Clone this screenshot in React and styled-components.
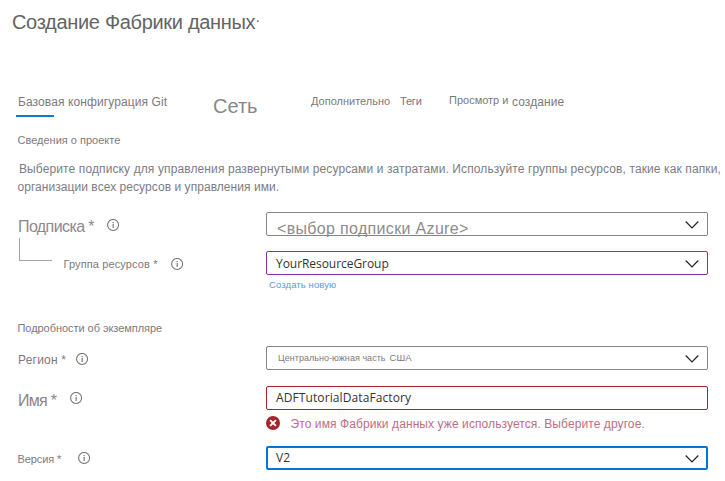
import React from 'react';
import styled, { createGlobalStyle } from 'styled-components';

const GlobalStyle = createGlobalStyle`
  * { box-sizing: border-box; }
  body { margin: 0; background: #fff; overflow: hidden; }
`;

const Page = styled.main`
  display: flex;
  flex-direction: column;
  width: 725px;
  height: 481px;
  overflow: hidden;
  background: #fff;
  font-family: 'Liberation Sans', Arial, sans-serif;
`;

const Text = styled.span`
  display: block;
  flex: none;
  font-size: ${p => p.$size || 11}px;
  line-height: 20px;
  letter-spacing: ${p => p.$spacing || 0}px;
  color: ${p => p.$color || '#7c7a80'};
  white-space: pre;
  margin: ${p => p.$top || 0}px 0 0 ${p => p.$left || 0}px;
`;

const Header = styled.header`
  display: flex;
  height: 90px;
  padding: 12px 0 0 12px;
`;

const Title = styled.h1`
  margin: 0;
  font-size: 20px;
  font-weight: 400;
  line-height: 20px;
  letter-spacing: -0.32px;
  color: #646464;
  white-space: nowrap;
`;

const Tabs = styled.nav`
  display: flex;
  align-items: flex-start;
  height: 40px;
  padding-left: 16px;
`;

const Tab = styled.div`
  flex: none;
  width: ${p => p.$width}px;
`;

const ActiveLine = styled.div`
  width: 38px;
  height: 2px;
  margin-top: 3px;
  background: #0f78d4;
`;

const Section = styled.section`
  height: ${p => p.$height}px;
  padding-left: 17px;
`;

const Description = styled.p`
  margin: 9px 0 0;
  display: flex;
  flex-direction: column;
`;

const FieldRow = styled.div`
  display: flex;
  align-items: flex-start;
  flex: none;
  height: ${p => p.$height}px;
`;

const LabelCell = styled.div`
  display: flex;
  align-items: flex-start;
  flex: none;
  width: 266px;
  height: 24px;
`;

const Branch = styled.div`
  flex: none;
  width: 33px;
  height: 23px;
  margin: -13px 11px 0 19px;
  border-left: 1px solid #a3a3a3;
  border-bottom: 1px solid #a3a3a3;
`;

const LabelText = styled.div`
  flex: none;
  width: ${p => p.$width}px;
`;

const InfoSlot = styled.div`
  flex: none;
  height: 13px;
  margin-top: ${p => p.$top}px;
`;

const Control = styled.div`
  display: flex;
  align-items: flex-start;
  justify-content: space-between;
  width: 442px;
  height: 24px;
  padding-right: ${p => (p.$thick ? 7 : 8)}px;
  border: ${p => (p.$thick ? 2 : 1)}px solid ${p => p.$border || '#868686'};
  border-radius: 2px;
`;

const Value = styled.span`
  font-family: 'Open Sans', 'Noto Sans', sans-serif;
  font-size: 12px;
  line-height: 20px;
  letter-spacing: ${p => p.$spacing || 0}px;
  color: #333;
  margin: ${p => p.$top ?? 1}px 0 0 ${p => p.$left ?? 9}px;
`;

const RegionValue = styled.div`
  display: flex;
  gap: 4px;
  padding: 1px 0 0 11px;
`;

const ChevronSlot = styled.div`
  height: 8px;
  margin-top: ${p => p.$top ?? 8}px;
`;

const Svg = styled.svg`
  display: block;
`;

const MessageRow = styled.div`
  display: flex;
  align-items: flex-start;
  flex: none;
  height: ${p => p.$height}px;
  padding-left: 266px;
`;

const ErrorSlot = styled.div`
  width: 14px;
  margin-top: 6px;
`;

function Info({ top }) {
  return (
    <InfoSlot $top={top}>
      <Svg width="13" height="13" viewBox="0 0 13 13">
        <circle cx="6.1" cy="6" r="5.5" fill="none" stroke="#747474" strokeWidth="1.1" />
        <path d="M6.2 3v1.3M6.2 5.1v4" stroke="#959595" strokeWidth="1.5" />
      </Svg>
    </InfoSlot>
  );
}

function Chevron({ top }) {
  return (
    <ChevronSlot $top={top}>
      <Svg width="14" height="8" viewBox="0 0 14 8">
        <path d="M.7.5 7 6.8 13.3.5" fill="none" stroke="#222" strokeWidth="1.2" />
      </Svg>
    </ChevronSlot>
  );
}

function Label({ width, top, left, size, spacing, infoTop, color, children }) {
  return (
    <>
      <LabelText $width={width}>
        <Text $top={top} $left={left} $size={size} $spacing={spacing} $color={color}>{children}</Text>
      </LabelText>
      <Info top={infoTop} />
    </>
  );
}

export default function App() {
  return (
    <Page>
      <GlobalStyle />
      <Header>
        <Title>Создание Фабрики данных</Title>
        <Text $size={15} $top={-2} $color="#646464">·</Text>
      </Header>

      <Tabs>
        <Tab $width={196}>
          <Text $top={2} $left={2} $size={12} $spacing={0.1}>Базовая конфигурация Git</Text>
          <ActiveLine />
        </Tab>
        <Tab $width={98}><Text $top={6} $left={1} $size={20} $color="#888">Сеть</Text></Tab>
        <Tab $width={89}><Text $top={1} $left={1}>Дополнительно</Text></Tab>
        <Tab $width={50}><Text $top={1} $left={1} $spacing={-0.2} $color="#7a717e">Теги</Text></Tab>
        <Tab $width={62}><Text>Просмотр и</Text></Tab>
        <Tab $width={60}><Text $top={2} $left={1} $size={12} $spacing={0.1}>создание</Text></Tab>
      </Tabs>

      <Section $height={82}>
        <Text $left={0.5}>Сведения о проекте</Text>
        <Description>
          <Text $size={12} $left={2} $spacing={0.112} $color="#7d7c86">Выберите подписку для управления развернутыми ресурсами и затратами. Используйте группы ресурсов, такие как папки,</Text>
          <Text $size={12} $top={-2} $left={0.5} $spacing={0.05} $color="#7d7c86">организации всех ресурсов и управления ими.</Text>
        </Description>
      </Section>

      <FieldRow $height={39}>
        <LabelCell>
          <Label width={107} left={18} top={5} size={16} spacing={-0.6} infoTop={7} color="#8f878f">Подписка *</Label>
        </LabelCell>
        <Control>
          <Text $size={16} $left={10} $top={6} $spacing={0.33} $color="#8c8c8c">{'<выбор подписки Azure>'}</Text>
          <Chevron />
        </Control>
      </FieldRow>

      <FieldRow $height={24}>
        <LabelCell>
          <Branch />
          <Label width={108} top={3} left={0.5} spacing={0.12} infoTop={7}>Группа ресурсов *</Label>
        </LabelCell>
        <Control $border="#8a2da5">
          <Value $top={2} $spacing={-0.05}>YourResourceGroup</Value>
          <Chevron />
        </Control>
      </FieldRow>
      <MessageRow $height={43}>
        <Text $size={9.5} $left={3} $spacing={0.1} $color="#5c9adb">Создать новую</Text>
      </MessageRow>

      <Section $height={28}>
        <Text $left={0.5} $spacing={-0.05}>Подробности об экземпляре</Text>
      </Section>

      <FieldRow $height={40}>
        <LabelCell>
          <Label width={76} left={18} top={4} size={12} spacing={0.2} infoTop={7} color="#80777f">Регион *</Label>
        </LabelCell>
        <Control>
          <RegionValue>
            <Text $size={9} $spacing={0.04}>Центрально-южная часть</Text>
            <Text $size={9.5}>США</Text>
          </RegionValue>
          <Chevron />
        </Control>
      </FieldRow>

      <FieldRow $height={24}>
        <LabelCell>
          <Label width={70} left={18} top={5} size={16} spacing={-0.7} infoTop={6} color="#8f8388">Имя *</Label>
        </LabelCell>
        <Control $border="#a4262c">
          <Value $spacing={0.1}>ADFTutorialDataFactory</Value>
        </Control>
      </FieldRow>
      <MessageRow $height={36}>
        <ErrorSlot>
          <Svg width="14" height="14" viewBox="0 0 14 14">
            <circle cx="7" cy="7" r="7" fill="#a4262c" />
            <path d="m4.1 4.1 5.8 5.8m0-5.8L4.1 9.9" stroke="#fff" strokeWidth="1.9" />
          </Svg>
        </ErrorSlot>
        <Text $size={12} $top={4} $left={10.5} $spacing={0.09} $color="#b96f86">Это имя Фабрики данных уже используется. Выберите другое.</Text>
      </MessageRow>

      <FieldRow $height={24}>
        <LabelCell>
          <Label width={78} left={17.5} top={3} spacing={-0.1} infoTop={6} color="#83767f">Версия *</Label>
        </LabelCell>
        <Control $border="#0078d4" $thick>
          <Value $top={0} $left={8}>V2</Value>
          <Chevron top={7} />
        </Control>
      </FieldRow>
    </Page>
  );
}
